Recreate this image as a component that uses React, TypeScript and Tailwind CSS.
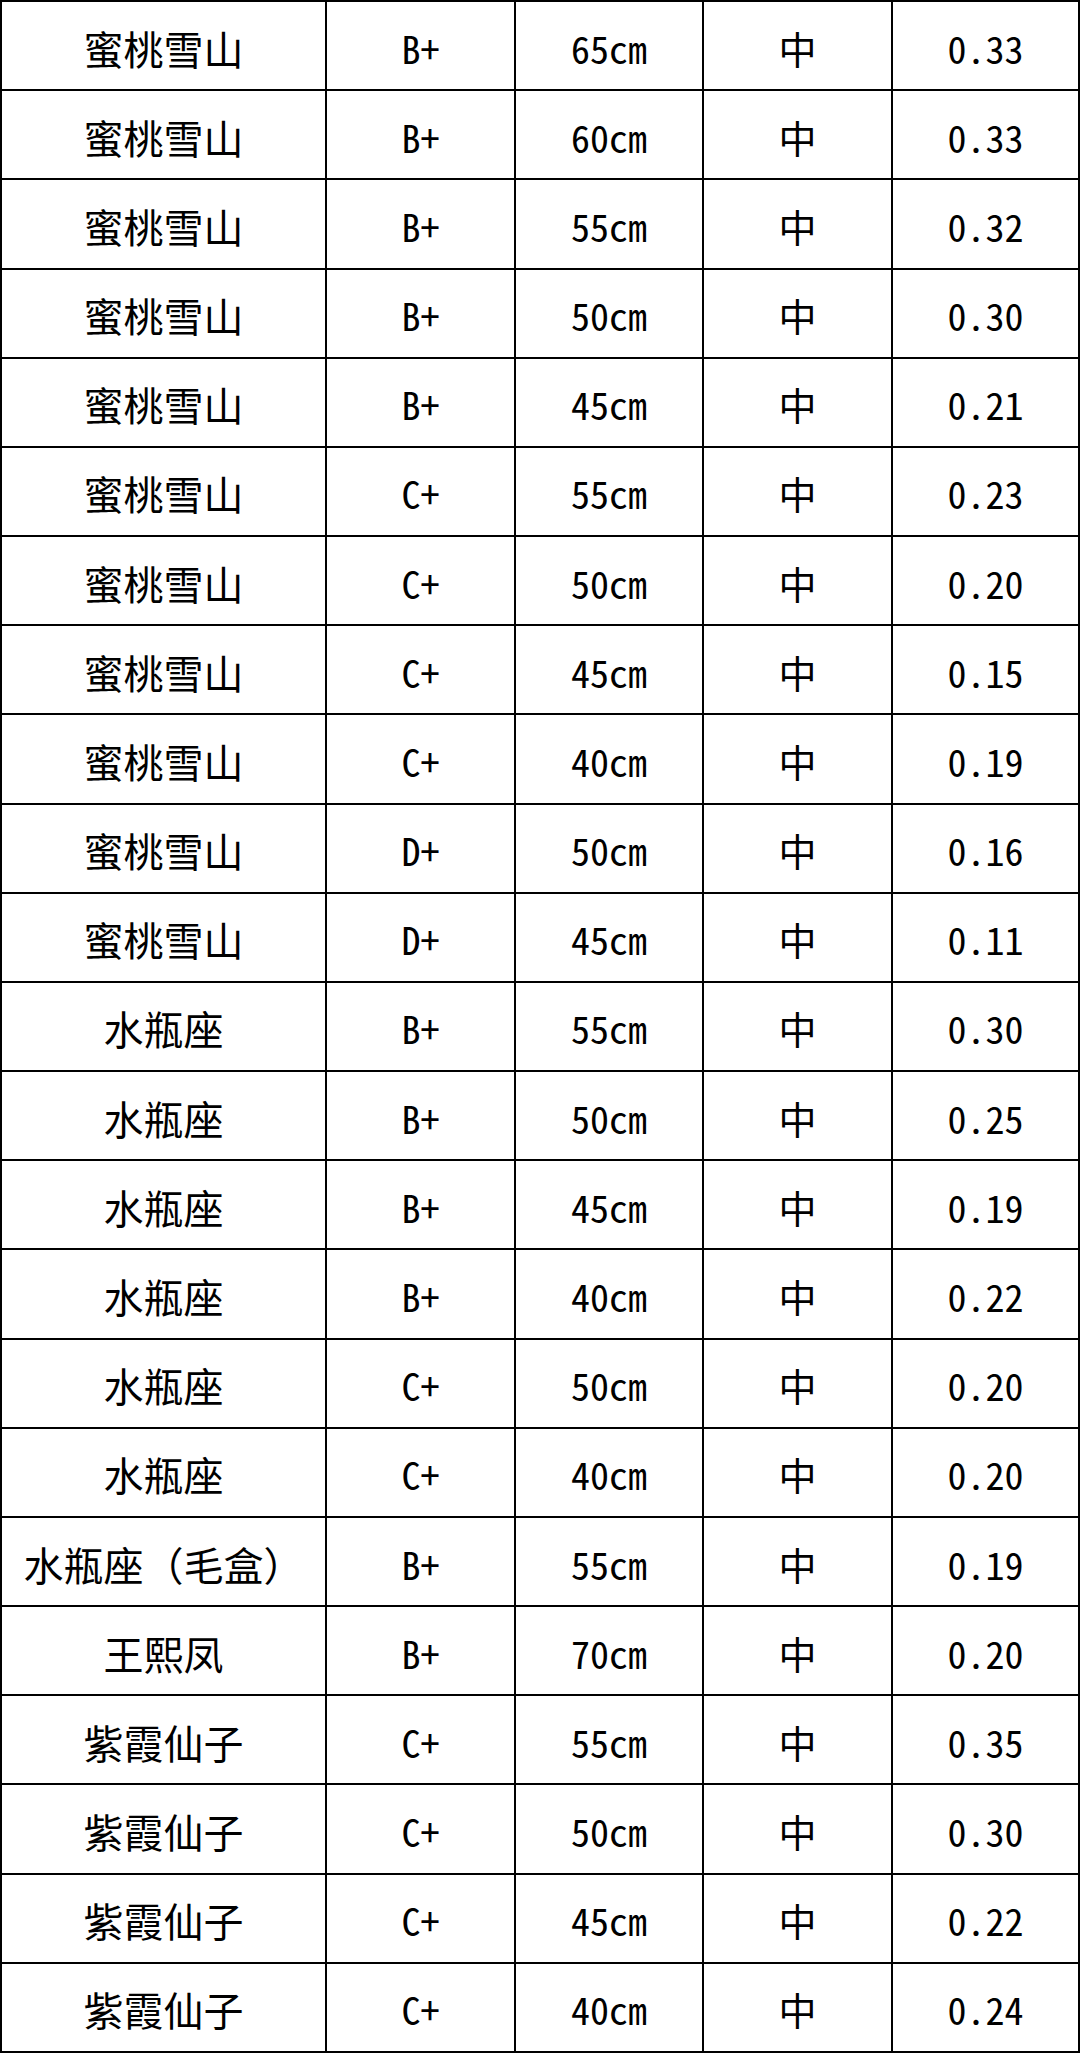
import React from 'react';

// name, grade, length, size, price
const rows: [string, string, string, string, string][] = [
  ['蜜桃雪山', 'B+', '65cm', '中', '0.33'],
  ['蜜桃雪山', 'B+', '60cm', '中', '0.33'],
  ['蜜桃雪山', 'B+', '55cm', '中', '0.32'],
  ['蜜桃雪山', 'B+', '50cm', '中', '0.30'],
  ['蜜桃雪山', 'B+', '45cm', '中', '0.21'],
  ['蜜桃雪山', 'C+', '55cm', '中', '0.23'],
  ['蜜桃雪山', 'C+', '50cm', '中', '0.20'],
  ['蜜桃雪山', 'C+', '45cm', '中', '0.15'],
  ['蜜桃雪山', 'C+', '40cm', '中', '0.19'],
  ['蜜桃雪山', 'D+', '50cm', '中', '0.16'],
  ['蜜桃雪山', 'D+', '45cm', '中', '0.11'],
  ['水瓶座', 'B+', '55cm', '中', '0.30'],
  ['水瓶座', 'B+', '50cm', '中', '0.25'],
  ['水瓶座', 'B+', '45cm', '中', '0.19'],
  ['水瓶座', 'B+', '40cm', '中', '0.22'],
  ['水瓶座', 'C+', '50cm', '中', '0.20'],
  ['水瓶座', 'C+', '40cm', '中', '0.20'],
  ['水瓶座（毛盒）', 'B+', '55cm', '中', '0.19'],
  ['王熙凤', 'B+', '70cm', '中', '0.20'],
  ['紫霞仙子', 'C+', '55cm', '中', '0.35'],
  ['紫霞仙子', 'C+', '50cm', '中', '0.30'],
  ['紫霞仙子', 'C+', '45cm', '中', '0.22'],
  ['紫霞仙子', 'C+', '40cm', '中', '0.24'],
];

export default function App() {
  return (
    <div className="w-[1080px] h-[2053px] bg-white text-black font-['Noto_Sans_CJK_SC',sans-serif]">
      <div className="grid h-full grid-cols-[325px_189px_188px_189px_187px] grid-rows-[repeat(23,minmax(0,1fr))] border-l-2 border-t-2 border-black">
        {rows.map((r, i) =>
          r.map((cell, j) => (
            <div
              key={`${i}-${j}`}
              className={`flex items-center justify-center pt-1 border-r-2 border-b-2 border-black leading-none whitespace-nowrap ${
                j === 0 ? 'text-[40px]' : "text-[38px] [font-feature-settings:'hwid']"
              }`}
            >
              {cell}
            </div>
          ))
        )}
      </div>
    </div>
  );
}
